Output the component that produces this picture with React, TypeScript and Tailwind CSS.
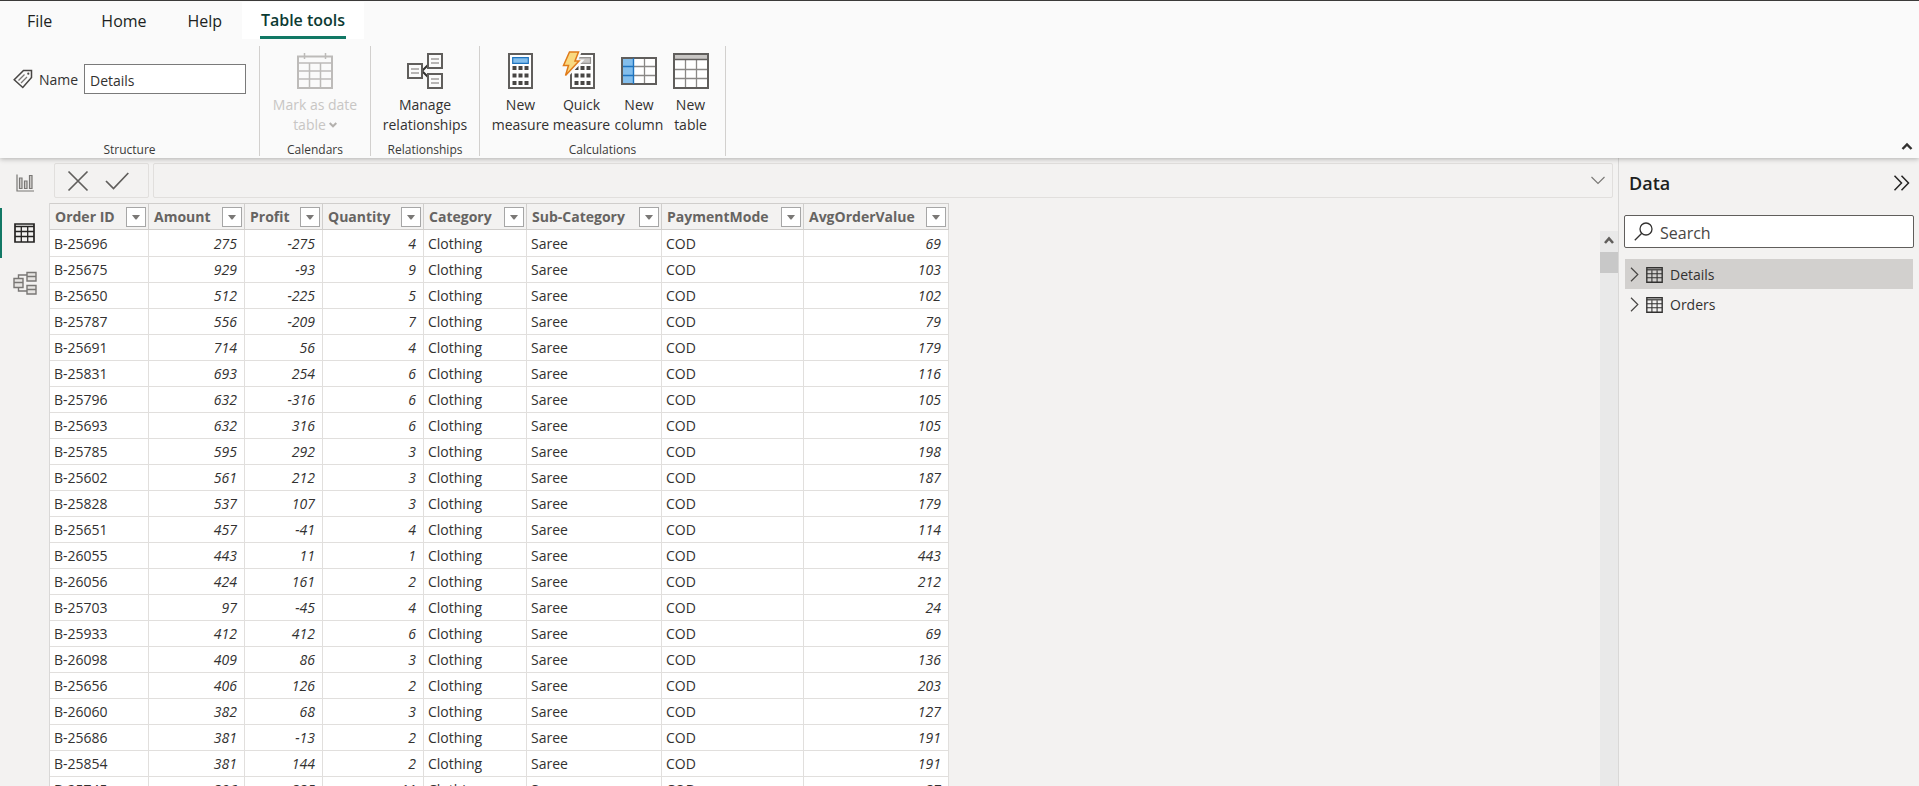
import { useState } from "react";
import type { ReactNode } from "react";
import clsx from "clsx";

interface Column {
  name: string;
  numeric?: boolean;
  width: string;
}

const COLUMNS: Column[] = [
  { name: "Order ID", width: "w-[99px]" },
  { name: "Amount", numeric: true, width: "w-[96px]" },
  { name: "Profit", numeric: true, width: "w-[78px]" },
  { name: "Quantity", numeric: true, width: "w-[101px]" },
  { name: "Category", width: "w-[103px]" },
  { name: "Sub-Category", width: "w-[135px]" },
  { name: "PaymentMode", width: "w-[142px]" },
  { name: "AvgOrderValue", numeric: true, width: "w-[145px]" },
];

// order id, amount, profit, quantity, average order value
const ORDERS: [string, number, number, number, number][] = [
  ["B-25696", 275, -275, 4, 69],
  ["B-25675", 929, -93, 9, 103],
  ["B-25650", 512, -225, 5, 102],
  ["B-25787", 556, -209, 7, 79],
  ["B-25691", 714, 56, 4, 179],
  ["B-25831", 693, 254, 6, 116],
  ["B-25796", 632, -316, 6, 105],
  ["B-25693", 632, 316, 6, 105],
  ["B-25785", 595, 292, 3, 198],
  ["B-25602", 561, 212, 3, 187],
  ["B-25828", 537, 107, 3, 179],
  ["B-25651", 457, -41, 4, 114],
  ["B-26055", 443, 11, 1, 443],
  ["B-26056", 424, 161, 2, 212],
  ["B-25703", 97, -45, 4, 24],
  ["B-25933", 412, 412, 6, 69],
  ["B-26098", 409, 86, 3, 136],
  ["B-25656", 406, 126, 2, 203],
  ["B-26060", 382, 68, 3, 127],
  ["B-25686", 381, -13, 2, 191],
  ["B-25854", 381, 144, 2, 191],
  ["B-25745", 396, 225, 11, 37],
];

const TABS = ["File", "Home", "Help"];

export default function App() {
  return (
    <div className="flex h-screen flex-col overflow-hidden bg-[#f3f2f1] font-['Open_Sans','Noto_Sans',sans-serif] text-sm text-[#323130]">
      <Ribbon />
      <div className="flex min-h-0 flex-1">
        <ViewRail />
        <main className="flex min-w-0 flex-1 flex-col">
          <FormulaBar />
          <div className="flex min-h-0 flex-1">
            <div className="min-w-0 flex-1 overflow-hidden pt-1">
              <DataGrid />
            </div>
            <ScrollBar />
          </div>
        </main>
        <DataPane />
      </div>
    </div>
  );
}

function Ribbon() {
  return (
    <header className="relative z-10 border-t border-[#3b3a39] bg-[#fafafa] shadow-[0_1px_5px_rgba(0,0,0,0.28)]">
      <nav className="flex h-[38px] items-stretch pt-px text-base text-[#201f1e]">
        <div className="flex w-[242px] items-center gap-[49px] pl-[27px]">
          {TABS.map((tab) => (
            <button key={tab} type="button" className="last:-ml-2">
              {tab}
            </button>
          ))}
        </div>
        <button type="button" className="flex bg-white px-[18px] font-semibold text-[#0c3b33]">
          <span className="flex h-full w-[86px] items-center justify-center border-b-3 border-[#117865] pt-[2px] whitespace-nowrap">
            Table tools
          </span>
        </button>
      </nav>
      <div className="flex h-[119px] items-end justify-between">
        <div className="flex pb-[2px]">
          <RibbonGroup title="Structure" width="w-[260px]">
            <div className="flex items-center pt-[18px] pl-[13px]">
              <TagIcon />
              <label htmlFor="table-name" className="ml-[6px] w-[45px] pt-[2px]">
                Name
              </label>
              <input
                id="table-name"
                type="text"
                defaultValue="Details"
                className="h-[30px] w-[162px] border border-[#7a7a7a] bg-white px-[5px] pt-[2px] outline-none"
              />
            </div>
          </RibbonGroup>
          <RibbonGroup title="Calendars" width="w-[111px]">
            <RibbonButton icon={<CalendarIcon />} lines={["Mark as date", "table"]} width="w-[110px]" disabled />
          </RibbonGroup>
          <RibbonGroup title="Relationships" width="w-[109px]">
            <RibbonButton icon={<RelationshipsIcon />} lines={["Manage", "relationships"]} width="w-[108px]" />
          </RibbonGroup>
          <RibbonGroup title="Calculations" width="w-[246px]">
            <div className="flex pl-[10px]">
              <RibbonButton icon={<MeasureIcon />} lines={["New", "measure"]} width="w-[61px]" />
              <RibbonButton icon={<QuickMeasureIcon />} lines={["Quick", "measure"]} width="w-[61px]" />
              <RibbonButton icon={<NewColumnIcon />} lines={["New", "column"]} width="w-[54px]" />
              <RibbonButton icon={<NewTableIcon />} lines={["New", "table"]} width="w-[49px]" />
            </div>
          </RibbonGroup>
        </div>
        <button type="button" aria-label="Collapse ribbon" className="mr-[6px] mb-2">
          <svg width="12" height="8" viewBox="0 0 12 8" fill="none" stroke="#323130" strokeWidth="2.4">
            <path d="M1.500 7 6 2.500 10.500 7" />
          </svg>
        </button>
      </div>
    </header>
  );
}

function RibbonGroup({ title, width, children }: { title: string; width: string; children: ReactNode }) {
  return (
    <section className={clsx("flex h-[110px] flex-col justify-between border-r border-[#d2d0ce]", width)}>
      {children}
      <h2 className="text-center text-xs leading-3 text-[#3b3a39]">{title}</h2>
    </section>
  );
}

interface RibbonButtonProps {
  icon: ReactNode;
  lines: [string, string];
  width: string;
  disabled?: boolean;
}

function RibbonButton({ icon, lines, width, disabled }: RibbonButtonProps) {
  return (
    <button
      type="button"
      disabled={disabled}
      className={clsx("flex flex-col items-center pt-[7px] leading-5", width, disabled && "text-[#c8c6c4]")}
    >
      {icon}
      <span className="mt-[6px] whitespace-nowrap">{lines[0]}</span>
      <span className="flex items-center gap-[3px] whitespace-nowrap">
        {lines[1]}
        {disabled && (
          <svg width="8" height="6" viewBox="0 0 8 6" fill="none" stroke="#b3b0ad" strokeWidth="2">
            <path d="M.7 1 4 4.300 7.300 1" />
          </svg>
        )}
      </span>
    </button>
  );
}

function ViewRail() {
  return (
    <nav className="w-[49px] shrink-0">
      <RailButton label="Report view">
        <ChartIcon />
      </RailButton>
      <RailButton label="Table view" active>
        <GridIcon className="h-5 w-[21px] text-[#252423]" />
      </RailButton>
      <RailButton label="Model view">
        <ModelIcon />
      </RailButton>
    </nav>
  );
}

function RailButton({ label, active, children }: { label: string; active?: boolean; children: ReactNode }) {
  return (
    <button
      type="button"
      aria-label={label}
      className={clsx(
        "flex h-[50px] w-full items-center justify-center border-l-2 pr-[2px] pb-px",
        active ? "border-[#117865]" : "border-transparent"
      )}
    >
      {children}
    </button>
  );
}

function FormulaBar() {
  return (
    <div className="flex h-[41px] shrink-0 gap-1 px-[5px] pt-[5px] pb-px">
      <div className="flex w-[95px] items-center gap-4 rounded-xs border border-[#e1dfdd] pl-3">
        <button type="button" aria-label="Cancel">
          <svg width="22" height="22" viewBox="0 0 22 22" fill="none" stroke="#605e5c" strokeWidth="1.700">
            <path d="M1.500 1.500 20.500 20.500M20.500 1.500 1.500 20.500" />
          </svg>
        </button>
        <button type="button" aria-label="Commit">
          <svg width="24" height="20" viewBox="0 0 24 20" fill="none" stroke="#605e5c" strokeWidth="1.700">
            <path d="M1 10 8.500 17.500 23.300 2" />
          </svg>
        </button>
      </div>
      <div className="flex min-w-0 flex-1 items-center rounded-xs border border-[#e1dfdd]">
        <input type="text" aria-label="Formula" className="h-full min-w-0 flex-1 px-2 outline-none" />
        <button type="button" aria-label="Expand formula bar" className="mr-[7px]">
          <svg width="14" height="9" viewBox="0 0 14 9" fill="none" stroke="#797775" strokeWidth="1.100">
            <path d="M.5 1 7 7.500 13.500 1" />
          </svg>
        </button>
      </div>
    </div>
  );
}

function DataGrid() {
  return (
    <table className="w-[900px] table-fixed border-separate border-spacing-0 border-l border-[#d9d8d7]">
      <thead>
        <tr className="h-[27px]">
          {COLUMNS.map((col) => (
            <th
              key={col.name}
              className={clsx("border-y border-r border-[#d0cecc] p-0 pt-px font-bold text-[#666462]", col.width)}
            >
              <div className="flex items-center justify-between pr-[2px] pl-[5px]">
                {col.name}
                <button
                  type="button"
                  aria-label={`Filter ${col.name}`}
                  className="flex size-5 items-center justify-center border border-[#a6a6a6] bg-white"
                >
                  <svg width="8" height="5" viewBox="0 0 8 5">
                    <path d="M0 0h8L4.500 4.500h-1z" fill="#7a7876" />
                  </svg>
                </button>
              </div>
            </th>
          ))}
        </tr>
      </thead>
      <tbody>
        {ORDERS.map(([id, amount, profit, quantity, average]) => (
          <tr key={id} className="h-[26px] first:h-[27px]">
            <Cell>{id}</Cell>
            <Cell numeric>{amount}</Cell>
            <Cell numeric>{profit}</Cell>
            <Cell numeric>{quantity}</Cell>
            <Cell>Clothing</Cell>
            <Cell>Saree</Cell>
            <Cell>COD</Cell>
            <Cell numeric>{average}</Cell>
          </tr>
        ))}
      </tbody>
    </table>
  );
}

function Cell({ numeric, children }: { numeric?: boolean; children: ReactNode }) {
  return (
    <td
      className={clsx(
        "border-r border-b border-[#e1dfdd] bg-white p-0 pt-px leading-5",
        numeric ? "pr-[7px] text-right italic" : "pl-1"
      )}
    >
      {children}
    </td>
  );
}

function ScrollBar() {
  return (
    <div className="mt-8 flex w-[18px] flex-col items-center bg-[#e9e9e9]">
      <div className="flex h-[21px] items-center pb-[3px]">
        <svg width="10" height="8" viewBox="0 0 10 8" fill="none" stroke="#605e5c" strokeWidth="2.600">
          <path d="M1 7 5 2.500 9 7" />
        </svg>
      </div>
      <div className="h-[21px] w-full bg-[#c8c8c8]" />
    </div>
  );
}

function DataPane() {
  const [selected, setSelected] = useState("Details");

  return (
    <aside className="w-[301px] shrink-0 border-l border-[#d9d8d7] pr-[5px] pl-[5px]">
      <div className="flex h-[57px] items-center justify-between pr-1 pb-2 pl-[5px]">
        <h2 className="text-lg font-semibold text-[#201f1e]">Data</h2>
        <button type="button" aria-label="Collapse pane">
          <svg width="17" height="16" viewBox="0 0 17 16" fill="none" stroke="#252423" strokeWidth="1.500">
            <path d="M1.500.8 8.500 8l-7 7.200M8.500.8 15.500 8l-7 7.200" />
          </svg>
        </button>
      </div>
      <label className="flex h-[33px] items-center gap-[7px] rounded-xs border border-[#605e5c] bg-white pl-[9px]">
        <SearchIcon />
        <input
          type="search"
          placeholder="Search"
          className="min-w-0 flex-1 pt-[2px] text-base outline-none placeholder:text-[#484644]"
        />
      </label>
      <ul className="mt-[11px] px-px">
        {["Details", "Orders"].map((name) => (
          <li key={name}>
            <button
              type="button"
              onClick={() => setSelected(name)}
              className={clsx("flex h-[30px] w-full items-center pt-px pl-[5px]", selected === name && "bg-[#d2d0ce]")}
            >
              <svg width="9" height="15" viewBox="0 0 9 15" fill="none" stroke="#484644" strokeWidth="1.200">
                <path d="M1 .8 7.800 7.500 1 14.200" />
              </svg>
              <GridIcon className="mx-[7px] h-4 w-[17px] text-[#323130]" />
              {name}
            </button>
          </li>
        ))}
      </ul>
    </aside>
  );
}

function TagIcon() {
  return (
    <svg width="20" height="20" viewBox="0 0 20 20" fill="none" stroke="#484644" strokeWidth="1.500">
      <path d="M10.500 1.500H18.500V8.500L9.800 18.500 1.200 10.700z" />
      <path d="M5.500 11.500 11.500 5.500M8 14 14 8" stroke="#797775" strokeWidth="1.300" />
      <circle cx="15.300" cy="4.700" r="1.100" fill="#484644" stroke="none" />
    </svg>
  );
}

function CalendarIcon() {
  return (
    <svg width="36" height="36" viewBox="0 0 36 36" fill="none" stroke="#bdbbb9" strokeWidth="1.500">
      <path d="M7.500 0v6M28.500 0v6" />
      <path d="M1 3.500h34v31.500H1z" strokeWidth="2" />
      <path d="M1 10h34M1 18h34M1 26h34M12.500 10v25M23.500 10v25" />
    </svg>
  );
}

function RelationshipsIcon() {
  return (
    <svg width="36" height="36" viewBox="0 0 36 36" fill="none" stroke="#605e5c" strokeWidth="2">
      <path d="M15 18 22 11M15 18 22 25" stroke="#323130" />
      <path d="M1 11h14v14H1zM21 1h14v14H21zM21 21h14v14H21z" fill="#fafafa" />
      <path d="M4 16h8M4 20h8M24 6h8M24 10h8M24 26h8M24 30h8" stroke="#a19f9d" strokeWidth="1.400" />
    </svg>
  );
}

// 3x3 block of calculator keys
function Keys({ x }: { x: number }) {
  return (
    <path
      d={[13, 20.5, 28]
        .flatMap((y) => [0, 6, 12].map((dx) => `M${x + dx} ${y}h4v4h-4z`))
        .join("")}
      fill="#484644"
      stroke="none"
    />
  );
}

function MeasureIcon() {
  return (
    <svg width="26" height="36" viewBox="0 0 26 36" fill="none">
      <path d="M1 1h23v34H1z" fill="#fff" stroke="#605e5c" strokeWidth="2" />
      <path d="M4.700 4.700h15.600v5.600H4.700z" fill="#83beec" stroke="#1e73be" strokeWidth="1.200" />
      <Keys x={4.5} />
    </svg>
  );
}

function QuickMeasureIcon() {
  return (
    <svg width="40" height="38" viewBox="0 0 40 38" fill="none" className="-mt-[2px]">
      <path d="M9 3h23v34H9z" fill="#fff" stroke="#605e5c" strokeWidth="2" />
      <path d="M13.500 6.700h15v5.600h-15z" fill="#c8c6c4" stroke="#979593" strokeWidth="1.200" />
      <g transform="translate(0 2)">
        <Keys x={12.5} />
      </g>
      <path d="M7.500 1h10l-4 9.500h4.500L4 25 7 14.500H1z" fill="#fafafa" stroke="#fafafa" strokeWidth="4" />
      <path d="M7.500 1h9l-3.500 9h4L3.500 24.500 6.500 14.500H1.500z" fill="#f9d980" stroke="#e07b1a" strokeWidth="1.500" />
    </svg>
  );
}

function NewColumnIcon() {
  return (
    <svg width="36" height="36" viewBox="0 0 36 36" fill="none">
      <path d="M1 5h34v26H1z" fill="#fff" />
      <path d="M1 5h11.500v26H1z" fill="#83beec" />
      <path d="M13 13.500h22M13 22.500h22M23.500 5v26" stroke="#8a8886" strokeWidth="1.300" />
      <path d="M1 5h34v26H1z" stroke="#605e5c" strokeWidth="2" />
      <path d="M2 13.500h10.500M2 22.500h10.500M12.500 5v26" stroke="#1e73be" strokeWidth="1.400" />
    </svg>
  );
}

function NewTableIcon() {
  return (
    <svg width="36" height="36" viewBox="0 0 36 36" fill="none">
      <path d="M1 1h34v34H1z" fill="#fff" />
      <path d="M1 1h34v5H1z" fill="#c8c6c4" />
      <path d="M1 16.500h34M1 25.500h34M12.500 6v29M23.500 6v29" stroke="#8a8886" strokeWidth="1.300" />
      <path d="M1 6.500h34" stroke="#605e5c" strokeWidth="1.300" />
      <path d="M1 1h34v34H1z" stroke="#605e5c" strokeWidth="2" />
    </svg>
  );
}

function ChartIcon() {
  return (
    <svg width="18" height="18" viewBox="0 0 18 18" fill="none" stroke="#797775" strokeWidth="1.200">
      <path d="M1 .5v16.500h17" />
      <path d="M3.500 4h2.500v10.500H3.500zM8.500 7H11v7.500H8.500zM13.500 1.500H16v13h-2.500z" fill="#d2d0ce" />
    </svg>
  );
}

function GridIcon({ className }: { className: string }) {
  return (
    <svg viewBox="0 0 21 20" preserveAspectRatio="none" fill="none" stroke="currentColor" className={className}>
      <path d="M1 1h19v18H1z" strokeWidth="1.700" />
      <path d="M1 3.500h19" strokeWidth="1.500" />
      <path d="M1 8.500h19M1 13.500h19M7.300 4v15M13.700 4v15" strokeWidth="1.300" />
    </svg>
  );
}

function ModelIcon() {
  return (
    <svg width="24" height="24" viewBox="0 0 24 24" fill="none" stroke="#797775" strokeWidth="1.400">
      <path d="M5.500 7.500V4H14M5.500 16.500V20H14" />
      <path d="M1 7.500h9v9H1zM14 1.500h9v8.500h-9zM14 14.500h9v8.500h-9z" fill="#e6e4e2" />
      <path d="M1 11.500h9M14 5.500h9M14 18.500h9" />
    </svg>
  );
}

function SearchIcon() {
  return (
    <svg width="19" height="19" viewBox="0 0 19 19" fill="none" stroke="#323130" strokeWidth="1.300">
      <circle cx="12" cy="7" r="6" />
      <path d="M7.800 11.200.8 18.200" />
    </svg>
  );
}
